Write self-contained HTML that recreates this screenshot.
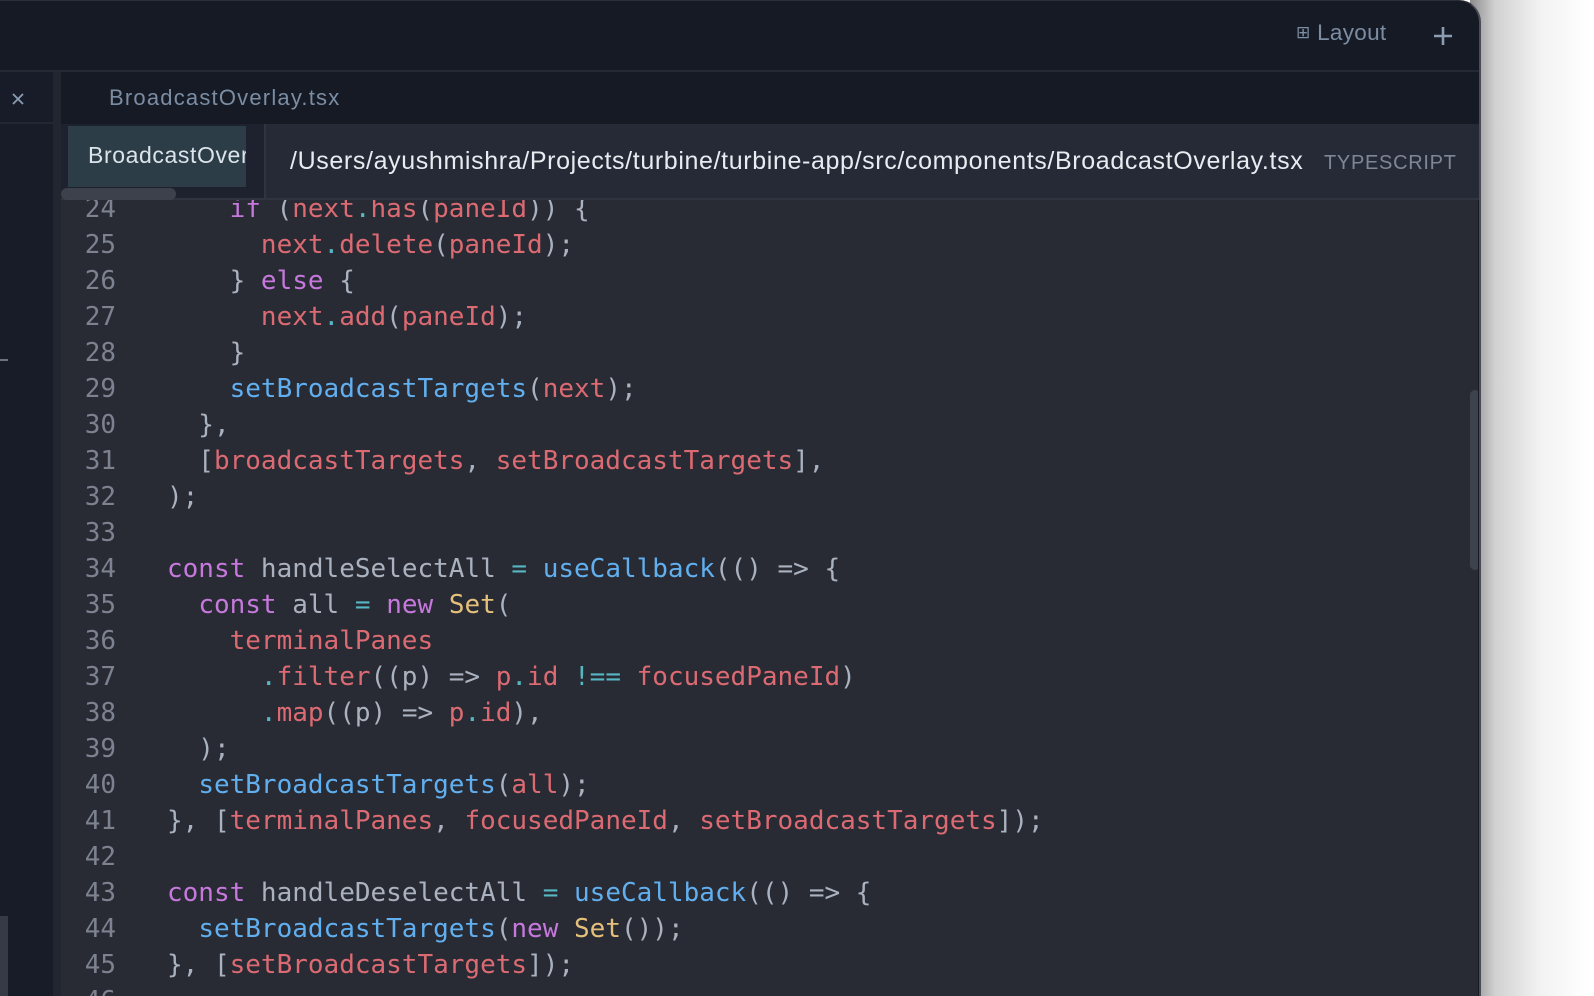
<!DOCTYPE html>
<html><head><meta charset="utf-8">
<style>
html,body{margin:0;padding:0;width:1594px;height:996px;overflow:hidden;background:#fff;font-family:"Liberation Sans","DejaVu Sans",sans-serif;position:relative}
.shadow{position:absolute;left:1470px;top:0;width:124px;height:996px;background:linear-gradient(to right,rgba(0,0,0,.45),rgba(0,0,0,.18) 25px,rgba(0,0,0,.05) 70px,rgba(0,0,0,0) 120px)}
.win{position:absolute;left:0;top:0;width:1481px;height:996px;box-sizing:border-box;background:#161a25;border-radius:0 22px 0 0;border-right:2px solid #4a4d55;border-top:1px solid #2a2e38;overflow:hidden}
.abs{position:absolute}
.code{position:absolute;left:61px;top:199px;width:1417px;height:796px;background:#282b34;overflow:hidden}
.lines{position:absolute;left:0;top:-9px;font-family:"DejaVu Sans Mono","Liberation Mono",monospace;font-size:26px;line-height:36px;white-space:pre;color:#abb2bf}
.ln{display:inline-block;width:55px;text-align:right;color:#7d8290;margin-right:51px}
.k{color:#c678dd}.v{color:#dc6a72}.f{color:#61afef}.y{color:#e5c07b}.o{color:#56b6c2}
</style></head><body>
<div class="shadow"></div>
<div class="win">
  <div class="abs" style="left:0;top:69px;width:1480px;height:2px;background:#252935"></div>
  <div class="abs" style="left:1296px;top:19px;font-size:22.5px;letter-spacing:.3px;color:#7b8da3;white-space:nowrap">
    <span style="font-size:17px;position:relative;top:-2px">⊞</span> Layout</div>
  <svg class="abs" style="left:1432px;top:24px" width="22" height="22" viewBox="0 0 22 22"><path d="M11 2V20M2 11H20" stroke="#8a9db2" stroke-width="2.6"/></svg>
  <div class="abs" style="left:0;top:71px;width:53px;height:925px;background:#181c28"></div>
  <div class="abs" style="left:0;top:121px;width:53px;height:2px;background:#232733"></div>
  <div class="abs" style="left:53px;top:71px;width:8px;height:925px;background:#222631"></div>
  <svg class="abs" style="left:11px;top:91px" width="14" height="14" viewBox="0 0 14 14"><path d="M2 2L12 12M12 2L2 12" stroke="#8a9db2" stroke-width="1.8"/></svg>
  <div class="abs" style="left:0;top:358px;width:8px;height:2px;background:#6b7282"></div>
  <div class="abs" style="left:0;top:915px;width:8px;height:81px;background:#363a46"></div>
  <div class="abs" style="left:109px;top:84px;font-size:22px;letter-spacing:1.2px;color:#7b8da3;white-space:nowrap">BroadcastOverlay.tsx</div>
  <div class="abs" style="left:61px;top:123px;width:1420px;height:74px;background:#262a37;border-bottom:2px solid #30343f"></div>
  <div class="abs" style="left:61px;top:123px;width:203px;height:74px;background:#1e222e"></div>
  <div class="abs" style="left:68px;top:125px;width:178px;height:61px;background:#2c3d47;overflow:hidden">
    <div style="position:absolute;left:20px;top:16px;font-size:23px;letter-spacing:.6px;color:#dbe4ea;white-space:nowrap">BroadcastOverlay</div></div>
  <div class="abs" style="left:61px;top:187px;width:115px;height:12px;border-radius:6px;background:#3d414c"></div>
  <div class="abs" style="left:264px;top:123px;width:2px;height:76px;background:#30343f"></div>
  <div class="abs" style="left:290px;top:146px;font-size:25px;letter-spacing:.63px;color:#e6ecf0;white-space:nowrap">/Users/ayushmishra/Projects/turbine/turbine-app/src/components/BroadcastOverlay.tsx</div>
  <div class="abs" style="left:1324px;top:151px;font-size:20px;color:#7f8794;letter-spacing:.7px">TYPESCRIPT</div>
  <div class="code">
    <div class="lines"><span class="ln">24</span>    <span class="k">if</span> (<span class="v">next</span><span class="o">.</span><span class="v">has</span>(<span class="v">paneId</span>)) {
<span class="ln">25</span>      <span class="v">next</span><span class="o">.</span><span class="v">delete</span>(<span class="v">paneId</span>);
<span class="ln">26</span>    } <span class="k">else</span> {
<span class="ln">27</span>      <span class="v">next</span><span class="o">.</span><span class="v">add</span>(<span class="v">paneId</span>);
<span class="ln">28</span>    }
<span class="ln">29</span>    <span class="f">setBroadcastTargets</span>(<span class="v">next</span>);
<span class="ln">30</span>  },
<span class="ln">31</span>  [<span class="v">broadcastTargets</span>, <span class="v">setBroadcastTargets</span>],
<span class="ln">32</span>);
<span class="ln">33</span>
<span class="ln">34</span><span class="k">const</span> handleSelectAll <span class="o">=</span> <span class="f">useCallback</span>(() =&gt; {
<span class="ln">35</span>  <span class="k">const</span> all <span class="o">=</span> <span class="k">new</span> <span class="y">Set</span>(
<span class="ln">36</span>    <span class="v">terminalPanes</span>
<span class="ln">37</span>      <span class="o">.</span><span class="v">filter</span>((p) =&gt; <span class="v">p</span><span class="o">.</span><span class="v">id</span> <span class="o">!==</span> <span class="v">focusedPaneId</span>)
<span class="ln">38</span>      <span class="o">.</span><span class="v">map</span>((p) =&gt; <span class="v">p</span><span class="o">.</span><span class="v">id</span>),
<span class="ln">39</span>  );
<span class="ln">40</span>  <span class="f">setBroadcastTargets</span>(<span class="v">all</span>);
<span class="ln">41</span>}, [<span class="v">terminalPanes</span>, <span class="v">focusedPaneId</span>, <span class="v">setBroadcastTargets</span>]);
<span class="ln">42</span>
<span class="ln">43</span><span class="k">const</span> handleDeselectAll <span class="o">=</span> <span class="f">useCallback</span>(() =&gt; {
<span class="ln">44</span>  <span class="f">setBroadcastTargets</span>(<span class="k">new</span> <span class="y">Set</span>());
<span class="ln">45</span>}, [<span class="v">setBroadcastTargets</span>]);
<span class="ln">46</span></div>
    <div class="abs" style="left:1409px;top:190px;width:10px;height:180px;border-radius:5px;background:#3e424c"></div>
  </div>
</div>
</body></html>
